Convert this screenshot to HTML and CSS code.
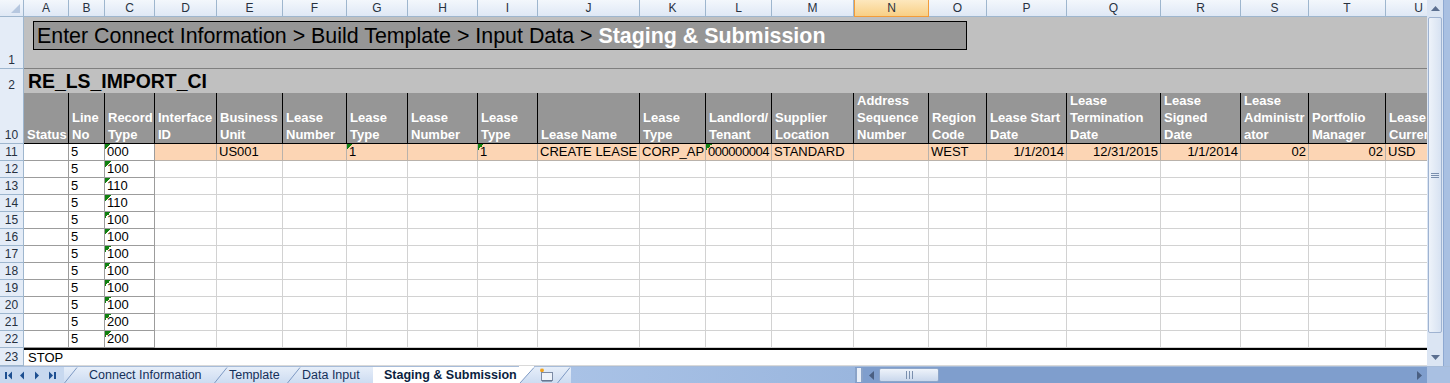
FILE: index.html
```html
<!DOCTYPE html>
<html>
<head>
<meta charset="utf-8">
<title>Staging &amp; Submission</title>
<link rel="stylesheet" href="styles.css">
</head>
<body>
<div class="app">
  <div class="main">
    <div class="viewport">
      <div class="row colheads">
        <div class="corner"><span class="selall"></span></div>
        <div class="ch">A</div><div class="ch">B</div><div class="ch">C</div><div class="ch">D</div><div class="ch">E</div><div class="ch">F</div><div class="ch">G</div><div class="ch">H</div><div class="ch">I</div><div class="ch">J</div><div class="ch">K</div><div class="ch">L</div><div class="ch">M</div><div class="ch sel">N</div><div class="ch">O</div><div class="ch">P</div><div class="ch">Q</div><div class="ch">R</div><div class="ch">S</div><div class="ch">T</div><div class="ch">U</div>
      </div>
      <div class="row r1">
        <div class="rh">1</div>
        <div class="banner"><div class="crumbs">Enter Connect Information &gt; Build Template &gt; Input Data &gt; <b>Staging &amp; Submission</b></div></div>
      </div>
      <div class="row r2">
        <div class="rh">2</div>
        <div class="title">RE_LS_IMPORT_CI</div>
      </div>
      <div class="row r10">
        <div class="rh">10</div>
        <div class="hc">Status</div>
        <div class="hc">Line<br>No</div>
        <div class="hc">Record<br>Type</div>
        <div class="hc">Interface<br>ID</div>
        <div class="hc">Business<br>Unit</div>
        <div class="hc">Lease<br>Number</div>
        <div class="hc">Lease<br>Type</div>
        <div class="hc">Lease<br>Number</div>
        <div class="hc">Lease<br>Type</div>
        <div class="hc">Lease Name</div>
        <div class="hc">Lease<br>Type</div>
        <div class="hc">Landlord/<br>Tenant</div>
        <div class="hc">Supplier<br>Location</div>
        <div class="hc">Address<br>Sequence<br>Number</div>
        <div class="hc">Region<br>Code</div>
        <div class="hc">Lease Start<br>Date</div>
        <div class="hc">Lease<br>Termination<br>Date</div>
        <div class="hc">Lease<br>Signed<br>Date</div>
        <div class="hc">Lease<br>Administr<br>ator</div>
        <div class="hc">Portfolio<br>Manager</div>
        <div class="hc">Lease<br>Curren</div>
      </div>
      <div class="row dr">
        <div class="rh">11</div>
        <div class="c k"></div><div class="c k">5</div><div class="c k flag">000</div>
        <div class="c o"></div>
        <div class="c o">US001</div>
        <div class="c o"></div>
        <div class="c o flag">1</div>
        <div class="c o"></div>
        <div class="c o flag">1</div>
        <div class="c o">CREATE LEASE</div>
        <div class="c o">CORP_AP</div>
        <div class="c o flag tight">000000004</div>
        <div class="c o">STANDARD</div>
        <div class="c o"></div>
        <div class="c o">WEST</div>
        <div class="c o r">1/1/2014</div>
        <div class="c o r">12/31/2015</div>
        <div class="c o r">1/1/2014</div>
        <div class="c o r">02</div>
        <div class="c o r">02</div>
        <div class="c o">USD</div>
      </div>
      <div class="row dr">
        <div class="rh">12</div>
        <div class="c k"></div><div class="c k">5</div><div class="c k flag">100</div>
        <div class="c"></div><div class="c"></div><div class="c"></div><div class="c"></div><div class="c"></div><div class="c"></div><div class="c"></div><div class="c"></div><div class="c"></div><div class="c"></div><div class="c"></div><div class="c"></div><div class="c"></div><div class="c"></div><div class="c"></div><div class="c"></div><div class="c"></div><div class="c"></div>
      </div>
      <div class="row dr">
        <div class="rh">13</div>
        <div class="c k"></div><div class="c k">5</div><div class="c k flag">110</div>
        <div class="c"></div><div class="c"></div><div class="c"></div><div class="c"></div><div class="c"></div><div class="c"></div><div class="c"></div><div class="c"></div><div class="c"></div><div class="c"></div><div class="c"></div><div class="c"></div><div class="c"></div><div class="c"></div><div class="c"></div><div class="c"></div><div class="c"></div><div class="c"></div>
      </div>
      <div class="row dr">
        <div class="rh">14</div>
        <div class="c k"></div><div class="c k">5</div><div class="c k flag">110</div>
        <div class="c"></div><div class="c"></div><div class="c"></div><div class="c"></div><div class="c"></div><div class="c"></div><div class="c"></div><div class="c"></div><div class="c"></div><div class="c"></div><div class="c"></div><div class="c"></div><div class="c"></div><div class="c"></div><div class="c"></div><div class="c"></div><div class="c"></div><div class="c"></div>
      </div>
      <div class="row dr">
        <div class="rh">15</div>
        <div class="c k"></div><div class="c k">5</div><div class="c k flag">100</div>
        <div class="c"></div><div class="c"></div><div class="c"></div><div class="c"></div><div class="c"></div><div class="c"></div><div class="c"></div><div class="c"></div><div class="c"></div><div class="c"></div><div class="c"></div><div class="c"></div><div class="c"></div><div class="c"></div><div class="c"></div><div class="c"></div><div class="c"></div><div class="c"></div>
      </div>
      <div class="row dr">
        <div class="rh">16</div>
        <div class="c k"></div><div class="c k">5</div><div class="c k flag">100</div>
        <div class="c"></div><div class="c"></div><div class="c"></div><div class="c"></div><div class="c"></div><div class="c"></div><div class="c"></div><div class="c"></div><div class="c"></div><div class="c"></div><div class="c"></div><div class="c"></div><div class="c"></div><div class="c"></div><div class="c"></div><div class="c"></div><div class="c"></div><div class="c"></div>
      </div>
      <div class="row dr">
        <div class="rh">17</div>
        <div class="c k"></div><div class="c k">5</div><div class="c k flag">100</div>
        <div class="c"></div><div class="c"></div><div class="c"></div><div class="c"></div><div class="c"></div><div class="c"></div><div class="c"></div><div class="c"></div><div class="c"></div><div class="c"></div><div class="c"></div><div class="c"></div><div class="c"></div><div class="c"></div><div class="c"></div><div class="c"></div><div class="c"></div><div class="c"></div>
      </div>
      <div class="row dr">
        <div class="rh">18</div>
        <div class="c k"></div><div class="c k">5</div><div class="c k flag">100</div>
        <div class="c"></div><div class="c"></div><div class="c"></div><div class="c"></div><div class="c"></div><div class="c"></div><div class="c"></div><div class="c"></div><div class="c"></div><div class="c"></div><div class="c"></div><div class="c"></div><div class="c"></div><div class="c"></div><div class="c"></div><div class="c"></div><div class="c"></div><div class="c"></div>
      </div>
      <div class="row dr">
        <div class="rh">19</div>
        <div class="c k"></div><div class="c k">5</div><div class="c k flag">100</div>
        <div class="c"></div><div class="c"></div><div class="c"></div><div class="c"></div><div class="c"></div><div class="c"></div><div class="c"></div><div class="c"></div><div class="c"></div><div class="c"></div><div class="c"></div><div class="c"></div><div class="c"></div><div class="c"></div><div class="c"></div><div class="c"></div><div class="c"></div><div class="c"></div>
      </div>
      <div class="row dr">
        <div class="rh">20</div>
        <div class="c k"></div><div class="c k">5</div><div class="c k flag">100</div>
        <div class="c"></div><div class="c"></div><div class="c"></div><div class="c"></div><div class="c"></div><div class="c"></div><div class="c"></div><div class="c"></div><div class="c"></div><div class="c"></div><div class="c"></div><div class="c"></div><div class="c"></div><div class="c"></div><div class="c"></div><div class="c"></div><div class="c"></div><div class="c"></div>
      </div>
      <div class="row dr">
        <div class="rh">21</div>
        <div class="c k"></div><div class="c k">5</div><div class="c k flag">200</div>
        <div class="c"></div><div class="c"></div><div class="c"></div><div class="c"></div><div class="c"></div><div class="c"></div><div class="c"></div><div class="c"></div><div class="c"></div><div class="c"></div><div class="c"></div><div class="c"></div><div class="c"></div><div class="c"></div><div class="c"></div><div class="c"></div><div class="c"></div><div class="c"></div>
      </div>
      <div class="row dr">
        <div class="rh">22</div>
        <div class="c k"></div><div class="c k">5</div><div class="c k flag">200</div>
        <div class="c"></div><div class="c"></div><div class="c"></div><div class="c"></div><div class="c"></div><div class="c"></div><div class="c"></div><div class="c"></div><div class="c"></div><div class="c"></div><div class="c"></div><div class="c"></div><div class="c"></div><div class="c"></div><div class="c"></div><div class="c"></div><div class="c"></div><div class="c"></div>
      </div>
      <div class="row r23">
        <div class="rh">23</div>
        <div class="stop">STOP</div>
      </div>
    </div>
    <div class="vscroll">
      <div class="vbar">
        <div class="vbtn"><svg width="9" height="5" viewBox="0 0 9 5"><path d="M0 5 L4.5 0 L9 5 Z" fill="#5b6f90"/></svg></div>
        <div class="vthumb"><svg width="8" height="5" viewBox="0 0 8 5"><path d="M0 0.5H8M0 2.5H8M0 4.5H8" stroke="#7a8fae"/></svg></div>
        <div class="vtrack"></div>
        <div class="vbtn"><svg width="9" height="5" viewBox="0 0 9 5"><path d="M0 0 L4.5 5 L9 0 Z" fill="#5b6f90"/></svg></div>
      </div>
      <div class="vframe"></div>
    </div>
  </div>
  <div class="bottombar">
    <div class="nav">
      <svg width="62" height="17" viewBox="0 0 62 17">
        <g fill="#1d4f91">
          <rect x="5" y="5" width="2" height="7"/><path d="M12 4.5 L8 8.5 L12 12.5 Z"/>
          <path d="M24 4.5 L20 8.5 L24 12.5 Z"/>
          <path d="M35 4.5 L39 8.5 L35 12.5 Z"/>
          <path d="M49 4.5 L53 8.5 L49 12.5 Z"/><rect x="54" y="5" width="2" height="7"/>
        </g>
      </svg>
    </div>
    <div class="tabs">
      <div class="tab t1"><svg class="slant" width="14" height="17" viewBox="0 0 14 17"><path d="M0.5 17 L13 1.5" stroke="#7d99c3" fill="none"/></svg><span>Connect Information</span></div>
      <div class="tab t2"><svg class="slant" width="14" height="17" viewBox="0 0 14 17"><path d="M0.5 17 L13 1.5" stroke="#7d99c3" fill="none"/></svg><span>Template</span></div>
      <div class="tab t3"><svg class="slant" width="14" height="17" viewBox="0 0 14 17"><path d="M0.5 17 L13 1.5" stroke="#7d99c3" fill="none"/></svg><span>Data Input</span></div>
      <div class="tab t4 active"><span>Staging &amp; Submission</span></div>
      <div class="tab t5"><svg class="slant" width="16" height="17" viewBox="0 0 16 17"><path d="M0 0 L0 17 L1 17 L15 1.5 L15 0 Z" fill="#ffffff"/><path d="M1 17 L15 1.5" stroke="#7d99c3" fill="none"/></svg><svg class="newsheet" width="16" height="14" viewBox="0 0 16 14"><rect x="3.5" y="4.5" width="11" height="8" fill="#eef3fa" stroke="#7c8ca6"/><path d="M4 13 L14 13" stroke="#51627e"/><path d="M4 4 L4 0.5 M2 2.2 L6 2.2 M2.6 0.8 L5.4 3.6 M5.4 0.8 L2.6 3.6" stroke="#f0a21c" stroke-width="1.1"/></svg><svg class="slant" width="14" height="17" viewBox="0 0 14 17"><path d="M0.5 17 L13 1.5" stroke="#7d99c3" fill="none"/></svg></div>
    </div>
    <div class="fill"></div>
    <div class="hscroll">
      <div class="split"></div>
      <div class="hbtn"><svg width="5" height="9" viewBox="0 0 5 9"><path d="M5 0 L0 4.5 L5 9 Z" fill="#4a5f82"/></svg></div>
      <div class="hthumb"><svg width="7" height="8" viewBox="0 0 7 8"><path d="M0.5 0V8M3.5 0V8M6.5 0V8" stroke="#7a8fae"/></svg></div>
      <div class="htrack"></div>
      <div class="hbtn"><svg width="5" height="9" viewBox="0 0 5 9"><path d="M0 0 L5 4.5 L0 9 Z" fill="#4a5f82"/></svg></div>
    </div>
    <div class="bcorner"></div>
  </div>
</div>
</body>
</html>
```
FILE: styles.css
```css
* { box-sizing: border-box; }

html, body {
  margin: 0;
  padding: 0;
  background: #ffffff;
  font-family: "Liberation Sans", Arial, sans-serif;
  color: #000;
}

.app {
  width: 1450px;
  height: 383px;
  display: flex;
  flex-direction: column;
  overflow: hidden;
}

.main {
  display: flex;
  height: 366px;
}

.viewport {
  width: 1427px;
  height: 366px;
  overflow: hidden;
  display: flex;
  flex-direction: column;
}

.row {
  display: grid;
  grid-template-columns: 24px 45px 36px 50px 62px 66px 64px 61px 70px 60px 102px 66px 66px 82px 75px 58px 80px 94px 80px 68px 77px 66px;
}

/* column headers */
.colheads { height: 17px; }
.corner, .ch {
  background: linear-gradient(#f3f7fc, #dfe8f5);
  border-right: 1px solid #9eb6ce;
  border-bottom: 1px solid #9eb6ce;
}
.corner {
  display: flex;
  justify-content: flex-end;
  align-items: flex-end;
  padding: 0 3px 3px 0;
}
.selall {
  width: 0;
  height: 0;
  border-left: 9px solid transparent;
  border-bottom: 9px solid #b6c7df;
}
.ch {
  text-align: center;
  font-size: 12px;
  line-height: 16px;
  color: #27313f;
}
.ch.sel {
  background: linear-gradient(#fde7bd, #f8cf85);
  border: 1px solid #f29c3a;
  border-top: 0;
}

/* row headers */
.rh {
  background: #e4ecf7;
  border-right: 1px solid #9eb6ce;
  border-bottom: 1px solid #9eb6ce;
  display: flex;
  align-items: flex-end;
  justify-content: center;
  font-size: 12px;
  line-height: 16px;
  color: #27313f;
}

/* row 1 */
.r1 { height: 52px; }
.banner {
  grid-column: 2 / -1;
  background: #c0c0c0;
  border-bottom: 1px solid #7f7f7f;
  padding: 4px 0 0 9px;
}
.crumbs {
  width: 934px;
  height: 29px;
  border: 1px solid #000;
  background: #969696;
  font-size: 21.4px;
  line-height: 28px;
  padding-left: 3px;
  white-space: nowrap;
}
.crumbs b { color: #ffffff; }

/* row 2 */
.r2 { height: 24px; }
.title {
  grid-column: 2 / -1;
  background: #c0c0c0;
  border-bottom: 1px solid #000;
  font-weight: bold;
  font-size: 19.4px;
  line-height: 24px;
  padding-left: 4px;
}

/* row 10 header cells */
.r10 { height: 51px; }
.hc {
  background: #969696;
  border-right: 1px solid #000;
  border-bottom: 1px solid #000;
  color: #ffffff;
  font-weight: bold;
  font-size: 13px;
  line-height: 17px;
  padding-left: 3px;
  display: flex;
  flex-direction: column;
  justify-content: flex-end;
  white-space: nowrap;
  overflow: hidden;
}

/* data rows */
.dr { height: 17px; }
.c {
  border-right: 1px solid #d2d2d2;
  border-bottom: 1px solid #d2d2d2;
  font-size: 13px;
  line-height: 16px;
  padding: 0 2px;
  white-space: nowrap;
  overflow: hidden;
  background-repeat: no-repeat;
}
.c.k { border-color: #9c9c9c; }
.c.o {
  background-color: #fcd5b4;
  border-color: #b9b2ab;
}
.c.r { text-align: right; }
.c.tight { letter-spacing: -0.45px; }
.c.flag {
  background-image: linear-gradient(135deg, #108010 50%, transparent 50%);
  background-size: 6px 6px;
  background-position: 0 0;
}

/* row 23 */
.r23 { height: 18px; }
.stop {
  grid-column: 2 / -1;
  border-top: 2px solid #000;
  border-bottom: 1px solid #d9d9d9;
  font-size: 13px;
  line-height: 15px;
  padding-left: 4px;
}

/* vertical scrollbar */
.vscroll {
  width: 23px;
  height: 366px;
  display: flex;
}
.vbar {
  width: 16px;
  display: flex;
  flex-direction: column;
  background: #dbe5f3;
}
.vbtn {
  height: 17px;
  display: flex;
  align-items: center;
  justify-content: center;
}
.vthumb {
  height: 316px;
  margin: 0 1px;
  border: 1px solid #9fb3d1;
  border-radius: 2px;
  background: linear-gradient(to right, #eef3fa, #d7e2f2);
  display: flex;
  align-items: center;
  justify-content: center;
}
.vtrack { flex: 1; }
.vframe {
  flex: 1;
  background: #a9c0e2;
  border-left: 1px solid #8ea9d2;
}

/* bottom bar */
.bottombar {
  height: 17px;
  display: flex;
  background: #c7d8ef;
  border-top: 1px solid #a7bcd9;
}
.nav {
  width: 64px;
  height: 16px;
  overflow: hidden;
}
.tabs {
  display: flex;
  height: 16px;
}
.tab {
  display: flex;
  align-items: center;
  height: 16px;
  font-size: 12.5px;
  line-height: 16px;
  color: #15305a;
  white-space: nowrap;
  background: linear-gradient(#e6eef9, #cddcf1);
}
.tab .slant { flex: none; margin-top: -1px; }
.t1 { width: 150px; }
.t1 span { margin-left: 11px; }
.t2 { width: 73px; }
.t2 span { margin-left: 1px; }
.t3 { width: 86px; }
.t3 span { margin-left: 1px; }
.t4 {
  width: 146px;
  background: #ffffff;
  font-weight: bold;
  color: #0b1f3f;
  padding-left: 11px;
}
.t5 { width: 52px; background: linear-gradient(#e6eef9, #cddcf1); }
.t5 .newsheet { margin: 0 3px 0 3px; flex: none; }
.fill {
  flex: 1;
  background: linear-gradient(to right, #a9c2e6, #9ab6de);
}
.hscroll {
  width: 572px;
  display: flex;
  align-items: stretch;
  background: #7f9ecd;
}
.split {
  width: 8px;
  background: #e9eff8;
  border: 1px solid #8aa3c8;
  border-width: 0 2px;
  margin: 1px 0;
}
.hbtn {
  width: 16px;
  display: flex;
  align-items: center;
  justify-content: center;
}
.hthumb {
  width: 60px;
  margin: 1px 0;
  border: 1px solid #8ea6c9;
  border-radius: 2px;
  background: linear-gradient(#eef3fa, #c9d7ec);
  display: flex;
  align-items: center;
  justify-content: center;
}
.htrack { flex: 1; }
.bcorner {
  width: 23px;
  background: #a9c0e2;
}
```
